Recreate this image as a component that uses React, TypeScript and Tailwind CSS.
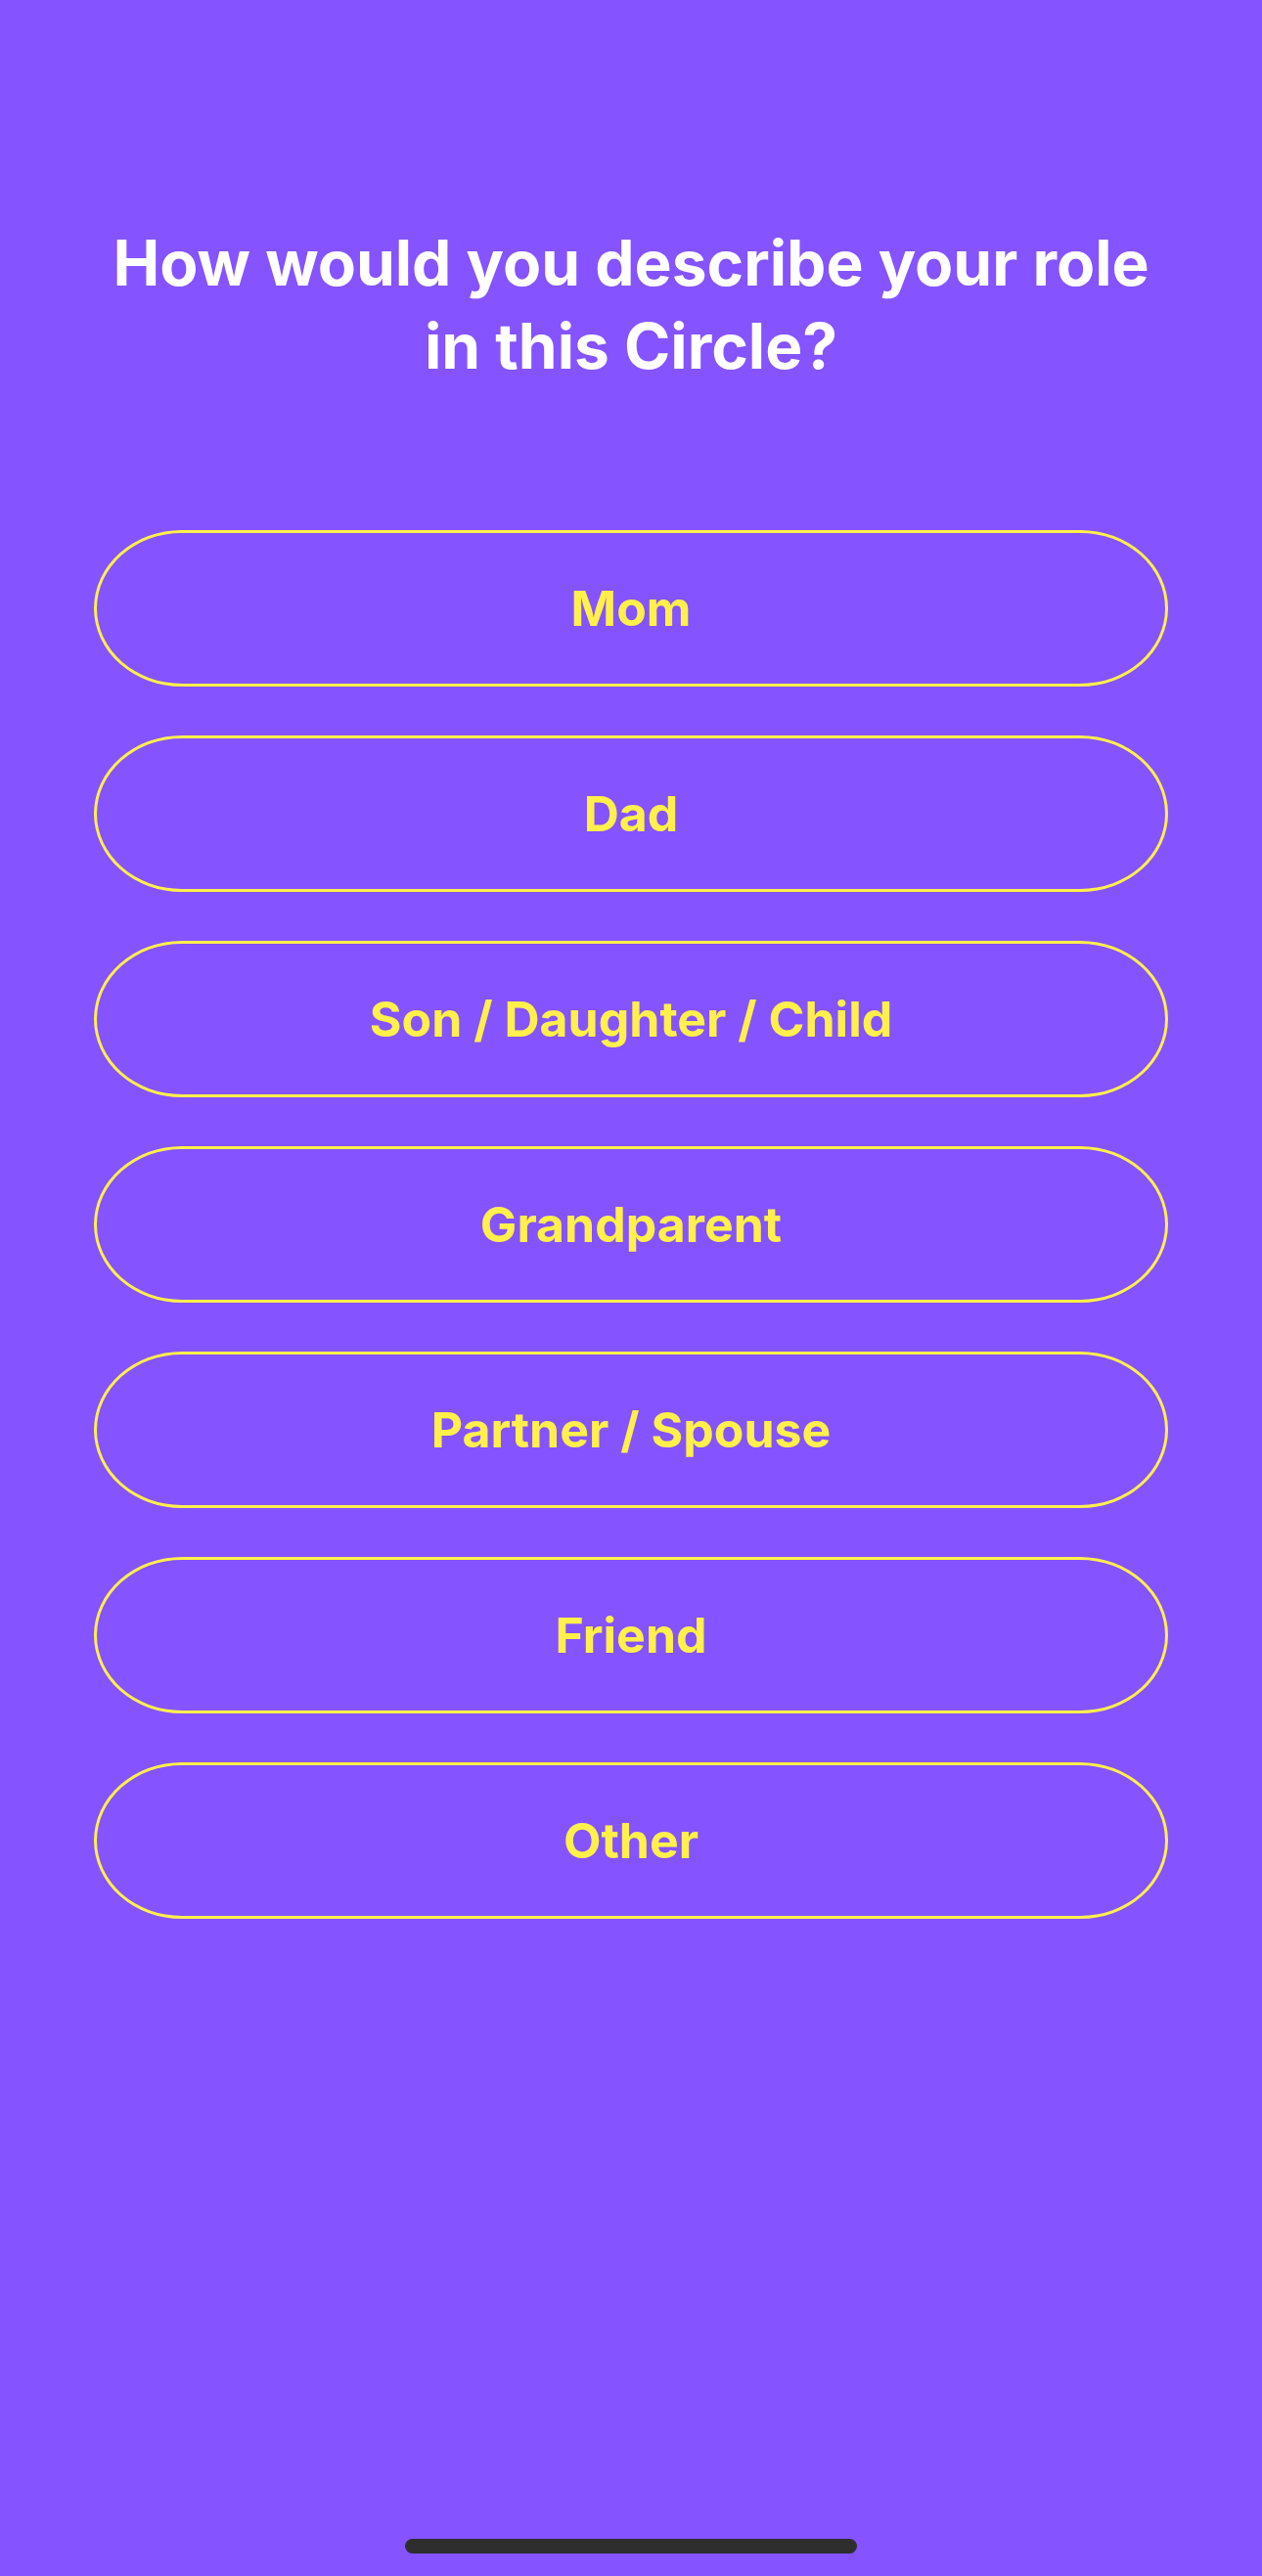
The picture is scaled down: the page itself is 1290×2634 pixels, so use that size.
import React from "react";

const options = [
  "Mom",
  "Dad",
  "Son / Daughter / Child",
  "Grandparent",
  "Partner / Spouse",
  "Friend",
  "Other",
];

export default function App() {
  return (
    <div className="flex min-h-[2634px] w-full flex-col bg-[#8553FF] font-['Inter',sans-serif]">
      <div className="flex flex-col px-[96px] pt-[226px]">
        <h1 className="text-center text-[64px] font-bold leading-[85px] text-white">
          How would you describe your role in this Circle?
        </h1>
        <div className="mt-[146px] flex flex-col gap-[50px]">
          {options.map((o) => (
            <button
              key={o}
              className="flex h-[160px] w-full items-center justify-center rounded-[90px/80px] border-[3px] border-[#FFF04A] bg-transparent text-[50px] font-bold text-[#FFF04A]"
            >
              {o}
            </button>
          ))}
        </div>
      </div>
      <div className="mt-auto flex justify-center pb-[23px]">
        <div className="h-[15px] w-[462px] rounded-full bg-[#2E2E2E]" />
      </div>
    </div>
  );
}
